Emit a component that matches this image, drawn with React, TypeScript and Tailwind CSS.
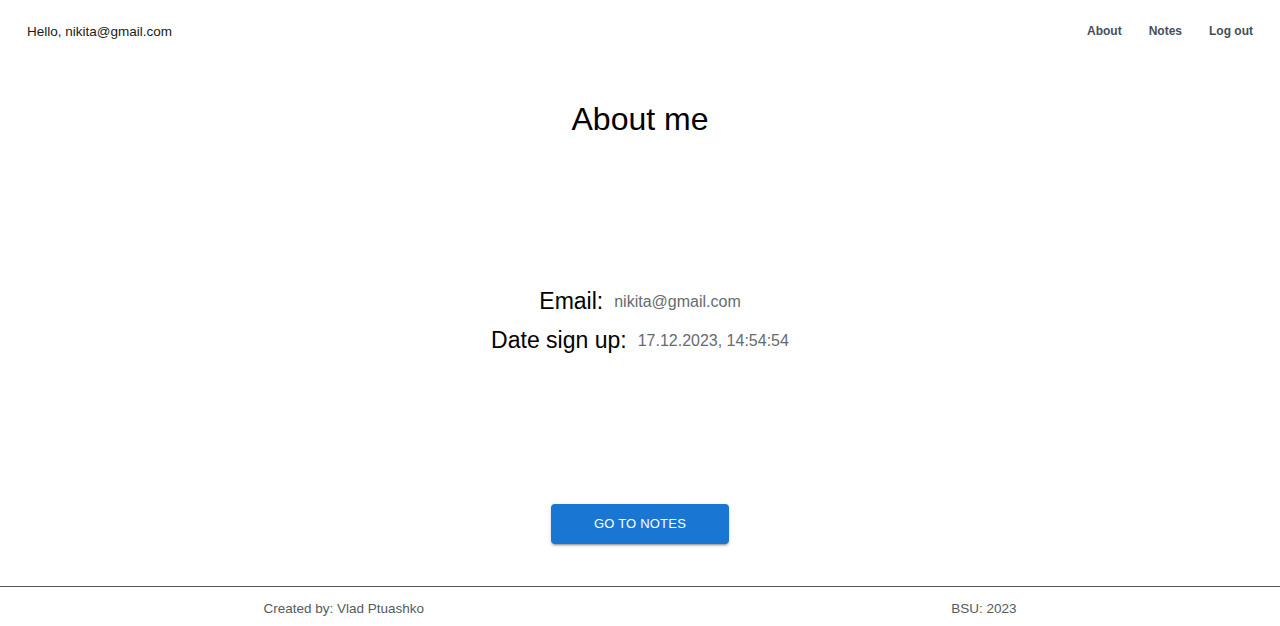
const NAV_LINKS = ['About', 'Notes', 'Log out'];

const user = {
  email: 'nikita@gmail.com',
  signedUp: '17.12.2023, 14:54:54',
};

function Header() {
  return (
    <header className="h-[60px] flex items-center justify-between pl-[27px] pr-[27px] pt-[2px]">
      <span className="text-[13.5px] text-[#1a1a1a] pt-[2px]">Hello, {user.email}</span>
      <nav className="flex items-center gap-[27px]">
        {NAV_LINKS.map(link => (
          <a key={link} href="#" className="text-[12px] font-bold text-[#454f5b]">
            {link}
          </a>
        ))}
      </nav>
    </header>
  );
}

function InfoRow({ label, value }: { label: string; value: string }) {
  return (
    <div className="h-[39px] flex items-center justify-center gap-[11px]">
      <span className="text-[23px] text-black">{label}</span>
      <span className="text-[16px] text-[#666b70] pt-[1px]">{value}</span>
    </div>
  );
}

export default function App() {
  return (
    <div className="min-h-screen flex flex-col bg-white font-['Liberation_Sans',Arial,sans-serif]">
      <Header />
      <main className="flex flex-col items-center">
        <h1 className="mt-[41px] text-[32px] leading-[37px] text-black">About me</h1>
        <div className="mt-[144px] w-full">
          <InfoRow label="Email:" value={user.email} />
          <InfoRow label="Date sign up:" value={user.signedUp} />
        </div>
        <button className="mt-[144px] mb-[42px] w-[178px] h-[40px] rounded-[4px] bg-[#1976d2] text-white text-[13px] tracking-[0.2px] uppercase shadow-[0_3px_1px_-2px_rgba(0,0,0,0.2),0_2px_2px_0_rgba(0,0,0,0.14),0_1px_5px_0_rgba(0,0,0,0.12)]">
          Go to notes
        </button>
      </main>
      <footer className="border-t border-[#555] h-[41px] flex items-center justify-around text-[13.5px] text-[#555a60] pt-[4px]">
        <span>Created by: Vlad Ptuashko</span>
        <span>BSU: 2023</span>
      </footer>
    </div>
  );
}
